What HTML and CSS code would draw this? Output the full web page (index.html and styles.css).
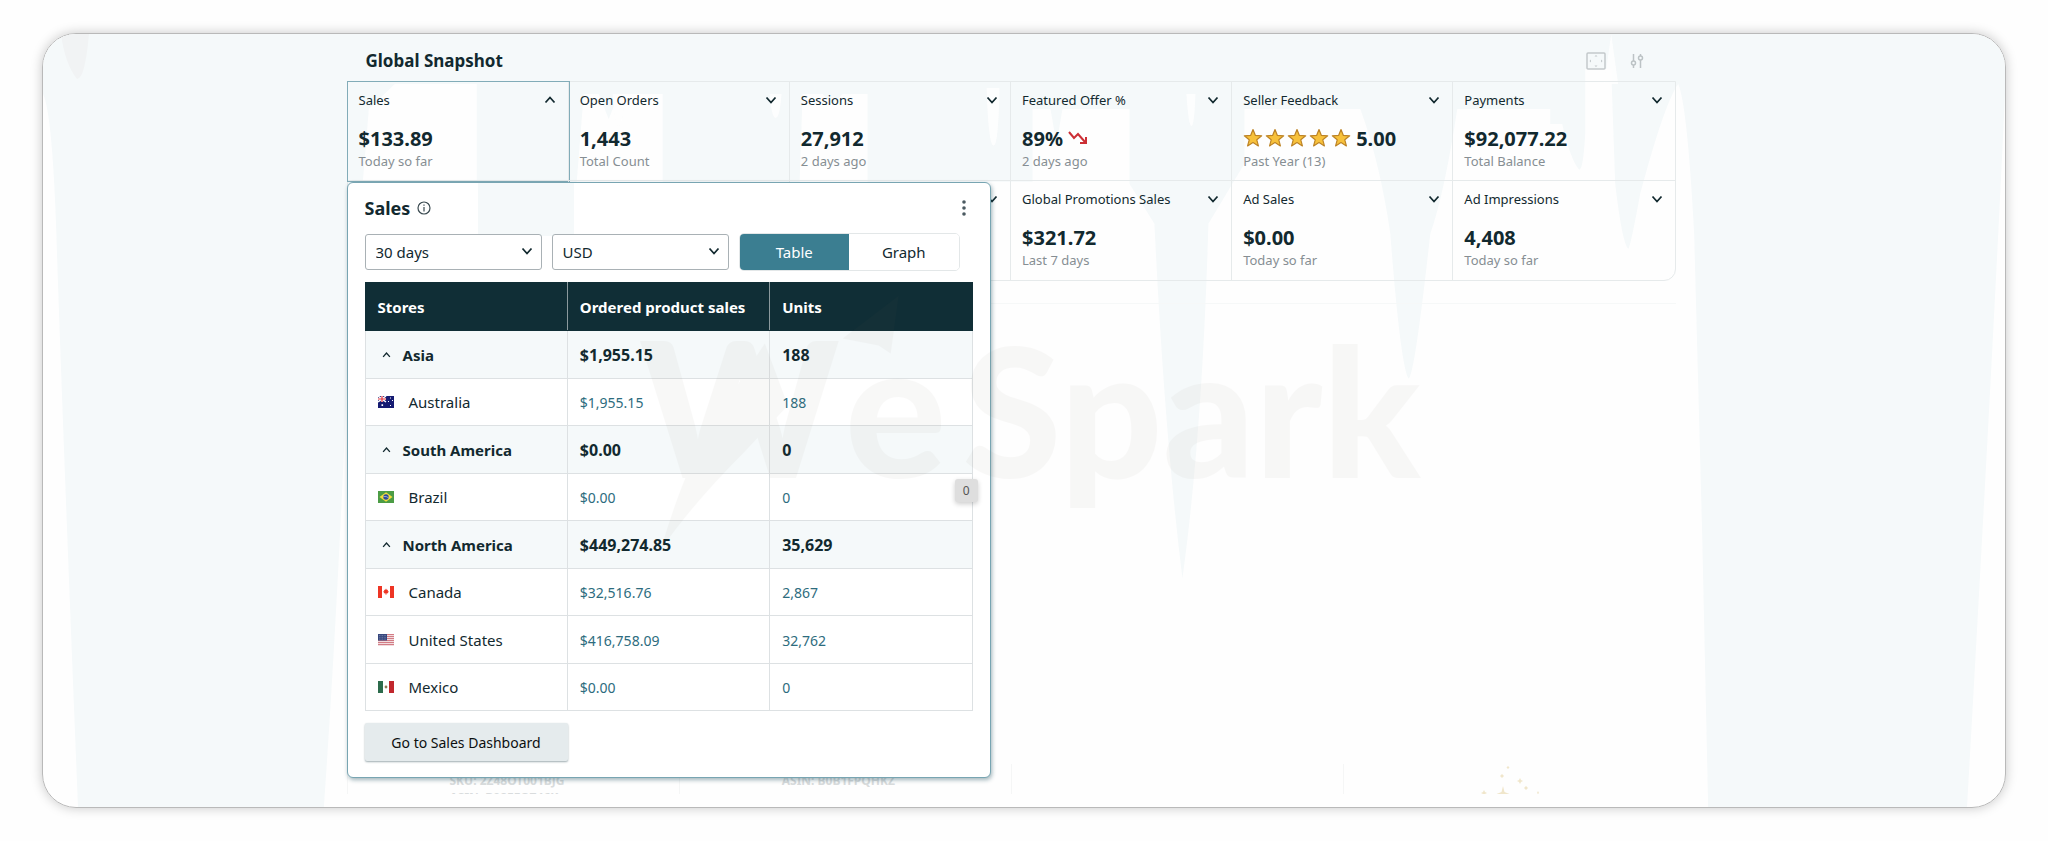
FILE: index.html
```
<!DOCTYPE html>
<html lang="en">
<head>
  <meta charset="UTF-8">
  <meta name="viewport" content="width=device-width, initial-scale=1.0">
  <title>Global Snapshot</title>
  <link rel="stylesheet" href="styles.css">
</head>
<body>
  <!-- Shared icon shapes -->
  <svg class="defs" width="0" height="0" aria-hidden="true">
    <symbol id="chevron" viewBox="0 0 12 8"><path d="M1.5 1.5 6 6.5l4.500-5" fill="none" stroke="currentColor" stroke-width="1.800"/></symbol>
    <symbol id="star" viewBox="0 0 20 20"><path d="M10 1.500l2.400 5.900 6.300.4-4.900 4 1.600 6.100L10 14.500l-5.400 3.400 1.600-6.100-4.900-4 6.300-.4z" fill="#f7c13b" stroke="#bd8427" stroke-width="1.200" stroke-linejoin="round"/></symbol>
  </svg>

  <main class="frame">
    <svg class="backdrop" viewBox="0 0 1963 774" preserveAspectRatio="none" aria-hidden="true">
      <path d="M0 0H1963V60Q1952 300 1925 774H1666L1660 500 1652 200Q1645 70 1636 50Q1622 70 1598 160Q1588 215 1586 215Q1580 210 1573 150L1569 35H1543V100Q1541 136 1537 136Q1528 125 1520 90H1508V75H1415Q1402 160 1388 200Q1372 345 1366 345Q1358 330 1348 200Q1338 130 1318 75H1202V130L1166 190Q1160 400 1140 545Q1122 400 1112 190L1087 150V75H1020L1014 110 1008 75H990V148H825V60H800L790 70 780 60H760L757 148H620V60H576L566 85 556 60H541L534 148H434V50H352L326 75Q316 200 306 300Q296 560 281 774H35Q20 400 14 220Q10 80 0 60Z" fill="#f5f9fa"/>
      <path d="M570 60h12q-2 32-6 32t-6-32zM727 60h12q-2 24-6 24t-6-24zM944 54h13q-1 58-6 58t-7-58zM1144 60h9q-1 32-4 32t-5-32zM1562 50h14L1569 0z" fill="#fefefe" fill-opacity=".9"/>
      <path d="M18 0H46Q42 45 34 45Q22 30 18 0Z" fill="#f1f3f4"/>
    </svg>

    <div class="content">
      <header class="page-head">
        <h1>Global Snapshot</h1>
        <div class="tools">
          <button type="button" aria-label="Expand">
            <svg width="20" height="18" viewBox="0 0 20 18" fill="none" stroke="#c3c9cb" stroke-width="1.500"><rect x="1" y="1" width="18" height="16" rx="1"/><path d="M8.500 4.500 10 3l1.500 1.500zM8.500 13.500 10 15l1.500-1.500zM5 7.500 3.500 9 5 10.500zM15 7.500 16.500 9 15 10.500z" fill="#c3c9cb" stroke="none"/></svg>
          </button>
          <button type="button" aria-label="Settings">
            <svg width="14" height="16" viewBox="0 0 14 16" fill="none" stroke="#bcc3c5" stroke-width="1.500"><path d="M3.500 1v7M3.500 12v3M10.500 1v2M10.500 7v8"/><circle cx="3.500" cy="10" r="2"/><circle cx="10.500" cy="5" r="2"/></svg>
          </button>
        </div>
      </header>

      <section class="snapshot">
        <article class="card active">
          <button class="card-head" type="button" aria-expanded="true">Sales <svg class="chev up"><use href="#chevron"/></svg></button>
          <p class="value">$133.89</p>
          <p class="note">Today so far</p>
        </article>
        <article class="card">
          <button class="card-head" type="button">Open Orders <svg class="chev"><use href="#chevron"/></svg></button>
          <p class="value">1,443</p>
          <p class="note">Total Count</p>
        </article>
        <article class="card">
          <button class="card-head" type="button">Sessions <svg class="chev"><use href="#chevron"/></svg></button>
          <p class="value">27,912</p>
          <p class="note">2 days ago</p>
        </article>
        <article class="card">
          <button class="card-head" type="button">Featured Offer % <svg class="chev"><use href="#chevron"/></svg></button>
          <p class="value">89% <svg width="20" height="16" viewBox="0 0 20 16" fill="none" stroke="#cc2f35" stroke-width="2"><path d="M1 2l5 6 4-4 7 8M12 13h6V7"/></svg></p>
          <p class="note">2 days ago</p>
        </article>
        <article class="card">
          <button class="card-head" type="button">Seller Feedback <svg class="chev"><use href="#chevron"/></svg></button>
          <p class="value"><span class="stars"><svg><use href="#star"/></svg><svg><use href="#star"/></svg><svg><use href="#star"/></svg><svg><use href="#star"/></svg><svg><use href="#star"/></svg></span>5.00</p>
          <p class="note">Past Year (13)</p>
        </article>
        <article class="card">
          <button class="card-head" type="button">Payments <svg class="chev"><use href="#chevron"/></svg></button>
          <p class="value">$92,077.22</p>
          <p class="note">Total Balance</p>
        </article>
        <article class="card"></article>
        <article class="card"></article>
        <article class="card">
          <button class="card-head" type="button" aria-label="More"><span></span><svg class="chev"><use href="#chevron"/></svg></button>
        </article>
        <article class="card">
          <button class="card-head" type="button">Global Promotions Sales <svg class="chev"><use href="#chevron"/></svg></button>
          <p class="value">$321.72</p>
          <p class="note">Last 7 days</p>
        </article>
        <article class="card">
          <button class="card-head" type="button">Ad Sales <svg class="chev"><use href="#chevron"/></svg></button>
          <p class="value">$0.00</p>
          <p class="note">Today so far</p>
        </article>
        <article class="card">
          <button class="card-head" type="button">Ad Impressions <svg class="chev"><use href="#chevron"/></svg></button>
          <p class="value">4,408</p>
          <p class="note">Today so far</p>
        </article>

        <!-- Sales details, opened under the first card -->
        <div class="panel">
          <div class="panel-head">
            <h2>Sales</h2>
            <svg width="14" height="14" viewBox="0 0 14 14" fill="none" stroke="#3a4a50" stroke-width="1.200"><circle cx="7" cy="7" r="6"/><path d="M7 6v4.500M7 3.500v1.300"/></svg>
            <button class="menu" type="button" aria-label="Options"><svg width="4" height="16" viewBox="0 0 4 16" fill="#4b5a61"><circle cx="2" cy="2" r="1.800"/><circle cx="2" cy="8" r="1.800"/><circle cx="2" cy="14" r="1.800"/></svg></button>
          </div>
          <div class="controls">
            <div class="select">
              <select aria-label="Period"><option>30 days</option></select>
              <svg class="chev"><use href="#chevron"/></svg>
            </div>
            <div class="select">
              <select aria-label="Currency"><option>USD</option></select>
              <svg class="chev"><use href="#chevron"/></svg>
            </div>
            <div class="toggle">
              <button class="selected" type="button">Table</button>
              <button type="button">Graph</button>
            </div>
          </div>
          <table>
            <thead>
              <tr><th>Stores</th><th>Ordered product sales</th><th>Units</th></tr>
            </thead>
            <tbody>
              <tr class="group"><td><svg class="chev small up"><use href="#chevron"/></svg>Asia</td><td>$1,955.15</td><td>188</td></tr>
              <tr>
                <td><svg class="flag" viewBox="0 0 16 12" preserveAspectRatio="none"><path fill="#151b72" d="M0 0h16v12H0z"/><path d="M0 0l8 6M8 0 0 6" stroke="#fff" stroke-width="1.500"/><path d="M4 0v6M0 3h8" stroke="#fff" stroke-width="2.200"/><path d="M4 0v6M0 3h8" stroke="#e0323c" stroke-width="1.200"/><path d="M12 1.500h1v1h-1zM10 5h1v1h-1zM14 4h1v1h-1zM12 9h1v1h-1zM3.500 8.300h1.600v1.600H3.500z" fill="#fff"/></svg>Australia</td>
                <td><a href="#">$1,955.15</a></td><td><a href="#">188</a></td>
              </tr>
              <tr class="group"><td><svg class="chev small up"><use href="#chevron"/></svg>South America</td><td>$0.00</td><td>0</td></tr>
              <tr>
                <td><svg class="flag" viewBox="0 0 16 12"><path fill="#4c9c45" d="M0 0h16v12H0z"/><path d="M8 1.200 14.500 6 8 10.800 1.500 6z" fill="#f3dc3c"/><circle cx="8" cy="6" r="2.700" fill="#2c4a9c"/><path d="M5.500 5.500q3-.5 5 1.300" stroke="#dfe8f0" stroke-width=".6" fill="none"/></svg>Brazil</td>
                <td><a href="#">$0.00</a></td><td><a href="#">0</a></td>
              </tr>
              <tr class="group"><td><svg class="chev small up"><use href="#chevron"/></svg>North America</td><td>$449,274.85</td><td>35,629</td></tr>
              <tr>
                <td><svg class="flag" viewBox="0 0 16 12"><path fill="#fff" d="M0 0h16v12H0z"/><path fill="#ee3524" d="M0 0h4v12H0zM12 0h4v12h-4zM8 2.500l.9 1.600 1.100-.4-.3 1.500 1.300.3-1.700 2H8.300V9h-.6V7.500H6.700L5 5.500l1.300-.3L6 3.700l1.100.4z"/></svg>Canada</td>
                <td><a href="#">$32,516.76</a></td><td><a href="#">2,867</a></td>
              </tr>
              <tr>
                <td><svg class="flag" viewBox="0 0 16 12"><path fill="#f1dcde" d="M0 0h16v12H0z"/><path d="M0 .5h16M0 2.500h16M0 4.500h16M0 6.500h16M0 8.500h16M0 10.500h16" stroke="#d37c85"/><path fill="#37477d" d="M0 0h9v6.500H0z"/><path d="M1 1.500h7M1 3.300h7M1 5.100h7" stroke="#8d98bd" stroke-width=".7" stroke-dasharray=".8 .8"/></svg>United States</td>
                <td><a href="#">$416,758.09</a></td><td><a href="#">32,762</a></td>
              </tr>
              <tr>
                <td><svg class="flag" viewBox="0 0 16 12"><path fill="#fff" d="M0 0h16v12H0z"/><path fill="#2c6b4c" d="M0 0h5v12H0z"/><path fill="#c1272d" d="M11 0h5v12h-5z"/><circle cx="8" cy="6" r="1.400" fill="#8f7a55"/></svg>Mexico</td>
                <td><a href="#">$0.00</a></td><td><a href="#">0</a></td>
              </tr>
            </tbody>
          </table>
          <button class="dashboard" type="button">Go to Sales Dashboard</button>
          <span class="count">0</span>
        </div>
      </section>

      <!-- Listings still fading in behind the panel -->
      <section class="listings">
        <div class="listing">
          <p>SKU: 2Z48OT001BJG<br>ASIN: B08FFQZ46K</p>
        </div>
        <div class="listing">
          <p>ASIN: B0B1FPQHKZ</p>
        </div>
        <div class="listing"></div>
        <div class="listing sparkle">
          <svg width="60" height="34" viewBox="0 0 60 34" fill="#f0e6cb"><path d="M24 22l1.500 6 5 2-5 1h-3l-5-1 5-2zM23 10l2 2-2 2-2-2zM29 2l1.500 1.500L29 5l-1.500-1.500zM47 22l2 2-2 2-2-2zM59 27l1 2-1 1-1-1zM41 14l1 2 2 1-2 1-1 2-1-2-2-1 2-1zM5 26l1 2 2 1-2 1-1 2-1-2-2-1 2-1z"/></svg>
        </div>
      </section>
    </div>

    <svg class="watermark" viewBox="0 0 1963 774" aria-hidden="true">
      <text x="596" y="445" font-size="190">W</text>
      <path d="M618 516Q640 440 668 392L722 310 745 372 700 420Q650 470 618 516ZM800 305 856 262 848 320 836 312Z"/>
      <text x="802" y="445" font-size="190">e</text>
      <text x="920" y="445" font-size="180">Spark</text>
    </svg>
  </main>
</body>
</html>
```
FILE: styles.css
```
* {
  box-sizing: border-box;
}

body {
  display: flex;
  min-height: 100vh;
  margin: 0;
  padding: 33px 42px;
  background-color: #fefefe;
  color: #12292f;
  font-family: "Noto Sans", sans-serif;
  font-size: 13px;
}

h1,
h2,
p {
  margin: 0;
}

button,
select {
  color: inherit;
  font: inherit;
}

button {
  padding: 0;
  border: none;
  background: none;
  cursor: pointer;
}

svg {
  flex: none;
}

.defs {
  position: absolute;
}

.frame {
  position: relative;
  display: flex;
  flex: 1;
  justify-content: center;
  overflow: hidden;
  border: 1px solid #b9b9b9;
  border-radius: 34px;
  background-color: #fefefe;
}

body::before {
  content: "";
  position: absolute;
  inset: 33px 42px;
  border-radius: 34px;
  box-shadow: 0 0 12px rgba(0, 0, 0, 0.22);
}

.backdrop,
.watermark {
  position: absolute;
  inset: 0;
  width: 100%;
  height: 100%;
  pointer-events: none;
}

.watermark {
  z-index: 5;
  fill: #6e6450;
  font-family: Lato, sans-serif;
  font-weight: 900;
  opacity: 0.04;
}

.content {
  position: relative;
  display: flex;
  flex-direction: column;
  width: 68%;
  max-width: 1329px;
  margin-right: 26px;
}

.page-head {
  display: flex;
  align-items: center;
  justify-content: space-between;
  height: 47px;
  padding: 6px 32px 0 19px;
}

.page-head h1 {
  font-size: 17px;
}

.tools {
  display: flex;
  align-items: center;
  gap: 24px;
}

.tools svg {
  display: block;
}

/* Snapshot cards */
.snapshot {
  position: relative;
  display: grid;
  grid-template-columns: repeat(6, 1fr);
  grid-auto-rows: 99px;
  border: 1px solid #e6eaeb;
  border-radius: 0 0 12px 12px;
}

.card {
  padding: 8px 12px 8px 11px;
  border-right: 1px solid #e6eaeb;
  border-bottom: 1px solid #e6eaeb;
}

.card:nth-of-type(6n) {
  border-right: none;
}

.card:nth-of-type(n + 7) {
  border-bottom: none;
}

.card.active {
  outline: 1px solid #82acb8;
}

.card-head {
  display: flex;
  align-items: center;
  justify-content: space-between;
  width: 100%;
  height: 20px;
}

.chev {
  width: 12px;
  height: 8px;
}

.chev.up {
  transform: rotate(180deg);
}

.chev.small {
  width: 9px;
  height: 6px;
}

.value {
  display: flex;
  align-items: center;
  gap: 5px;
  height: 28px;
  margin-top: 14px;
  font-size: 20px;
  font-weight: 700;
}

.stars {
  display: flex;
  gap: 2px;
}

.stars svg {
  width: 20px;
  height: 20px;
}

.note {
  color: #868e93;
  line-height: 18px;
}

/* Sales panel */
.panel {
  position: absolute;
  top: 100px;
  left: -1px;
  z-index: 2;
  width: 644px;
  padding: 0 17px 16px;
  border: 1px solid #78a5b2;
  border-radius: 6px;
  background: linear-gradient(#f5f9fa, #f5f9fa) 130px 0 / 96px 53px no-repeat #fff;
  box-shadow: 1px 2px 4px rgba(20, 70, 85, 0.4);
}

.panel-head {
  display: flex;
  align-items: center;
  gap: 7px;
  height: 50px;
}

.panel-head h2 {
  font-size: 18px;
}

.menu {
  margin-left: auto;
  padding: 4px 7px;
}

.menu svg {
  display: block;
}

.controls {
  display: flex;
  align-items: center;
  gap: 10px;
  margin-bottom: 11px;
}

.select {
  position: relative;
  width: 177px;
}

.select select {
  display: block;
  width: 100%;
  height: 36px;
  padding: 0 10px;
  border: 1px solid #a9b1b5;
  border-radius: 3px;
  background-color: #fff;
  font-size: 15px;
  appearance: none;
}

.select .chev {
  position: absolute;
  top: 13px;
  right: 9px;
  pointer-events: none;
}

.toggle {
  display: flex;
  width: 221px;
  height: 38px;
  overflow: hidden;
  border: 1px solid #e3e7e8;
  border-radius: 5px;
}

.toggle button {
  flex: 1;
  background-color: #fff;
  font-size: 15px;
}

.toggle .selected {
  background-color: #3b7e91;
  color: #fff;
}

table {
  width: 100%;
  border-collapse: collapse;
  table-layout: fixed;
  font-size: 15px;
}

th,
td {
  height: 48px;
  padding: 0 12px;
  border: 1px solid #dde1e3;
  text-align: left;
}

tbody tr:nth-child(2n) td {
  height: 47px;
}

th {
  border-color: #102e36 #8b999d;
  background-color: #102e36;
  color: #fff;
}

th:first-child {
  border-left-color: #102e36;
}

th:last-child {
  border-right-color: #102e36;
}

.group td {
  background-color: #f5f9fa;
  font-weight: 700;
}

.group td + td {
  font-size: 16px;
}

td .chev {
  margin: 0 12px 3px 4px;
}

.flag {
  width: 16px;
  height: 12px;
  margin-right: 15px;
}

td a {
  color: #2d6c7e;
  font-size: 14px;
  text-decoration: none;
}

.dashboard {
  display: block;
  width: 203px;
  height: 38px;
  margin-top: 12px;
  border-radius: 2px;
  background-color: #e5ebed;
  box-shadow: 0 1px 2px rgba(40, 70, 80, 0.45);
  color: #0c0f10;
  font-size: 14px;
}

.count {
  position: absolute;
  top: 296px;
  right: 12px;
  padding: 0 8px;
  border-radius: 3px;
  background-color: #dedede;
  box-shadow: 0 2px 5px rgba(0, 0, 0, 0.2);
  color: #555;
  font-size: 12px;
  line-height: 23px;
}

/* Listings */
.listings {
  display: grid;
  flex: 1;
  grid-template-columns: repeat(4, 1fr);
  align-items: end;
  margin-top: 22px;
  padding-bottom: 13px;
  border-top: 1px solid #f6f8f8;
}

.listing {
  display: flex;
  height: 30px;
  overflow: hidden;
  padding: 8px 0 0 102px;
  border-left: 1px solid #f5f6f6;
  color: #d9dcdd;
  font-size: 12px;
  font-weight: 700;
  line-height: 17px;
}

.sparkle {
  padding: 0 0 0 135px;
}
```
